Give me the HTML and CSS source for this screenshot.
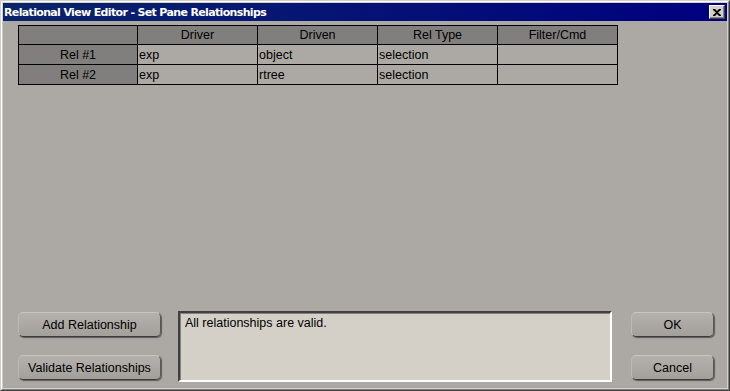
FILE: index.html
```html
<!DOCTYPE html>
<html lang="en">
<head>
    <meta charset="UTF-8">
    <title>Relational View Editor - Set Pane Relationships</title>
    <link rel="stylesheet" href="styles.css">
</head>
<body>
    <div class="window">
        <div class="frame">
            <div class="titlebar">
                <span class="title">Relational View Editor - Set Pane Relationships</span>
                <span class="close-btn">
                    <svg width="8" height="7" viewBox="0 0 8 7"><path d="M0 0h2l2 2 2-2h2v1L5 3.5 8 6v1H6L4 5 2 7H0V6l3-2.5L0 1z" fill="#000"/></svg>
                </span>
            </div>

            <div class="client">
                <div class="rel-grid">
                    <div class="cell head"></div>
                    <div class="cell head">Driver</div>
                    <div class="cell head">Driven</div>
                    <div class="cell head">Rel Type</div>
                    <div class="cell head">Filter/Cmd</div>

                    <div class="cell row-head">Rel #1</div>
                    <div class="cell">exp</div>
                    <div class="cell">object</div>
                    <div class="cell">selection</div>
                    <div class="cell"></div>

                    <div class="cell row-head">Rel #2</div>
                    <div class="cell">exp</div>
                    <div class="cell">rtree</div>
                    <div class="cell">selection</div>
                    <div class="cell"></div>
                </div>

                <div class="bottom">
                    <div class="btn-col left">
                        <button class="btn">Add Relationship</button>
                        <button class="btn">Validate Relationships</button>
                    </div>
                    <div class="status">All relationships are valid.</div>
                    <div class="btn-col right">
                        <button class="btn">OK</button>
                        <button class="btn">Cancel</button>
                    </div>
                </div>
            </div>
        </div>
    </div>
</body>
</html>
```

FILE: styles.css
```css
html, body {
    margin: 0;
    padding: 0;
}

body {
    font-family: "Liberation Sans", Arial, sans-serif;
    font-size: 12px;
    color: #000;
}

.window {
    width: 730px;
    height: 391px;
    box-sizing: border-box;
    border: 1px solid;
    border-color: #d4d0c8 #404040 #404040 #d4d0c8;
}

.frame {
    height: 100%;
    box-sizing: border-box;
    border: 1px solid;
    border-color: #fff #808080 #808080 #fff;
    padding: 1px;
    background: #d4d0c8;
    display: flex;
    flex-direction: column;
}

.titlebar {
    height: 18px;
    flex: none;
    display: flex;
    align-items: center;
    justify-content: space-between;
    padding: 0 2px 0 1px;
    background: linear-gradient(to right, #0a246a, #000080);
    color: #fff;
}

.title {
    font-family: "DejaVu Sans", sans-serif;
    font-weight: bold;
    font-size: 11px;
    letter-spacing: -0.65px;
}

.close-btn {
    width: 16px;
    height: 14px;
    box-sizing: border-box;
    display: flex;
    align-items: center;
    justify-content: center;
    background: #d4d0c8;
    border: 1px solid;
    border-color: #fff #404040 #404040 #fff;
    box-shadow: inset -1px -1px 0 #808080;
}

.client {
    flex: 1;
    background: #aca8a4;
    display: flex;
    flex-direction: column;
    padding: 4px 0 0 15px;
}

.rel-grid {
    display: grid;
    grid-template-columns: 118px repeat(4, 119px);
    grid-auto-rows: 19px;
    grid-template-rows: 18px;
    gap: 1px;
    padding: 1px;
    background: #000;
    width: max-content;
}

.cell {
    background: #aca8a4;
    padding: 1px 0 0 1px;
    line-height: 19px;
    font-size: 12.5px;
    white-space: nowrap;
}

.cell.head,
.cell.row-head {
    background: #807f7d;
    text-align: center;
    padding-left: 0;
}

.cell.head {
    line-height: 17px;
}

.bottom {
    margin-top: auto;
    margin-bottom: 6px;
    display: flex;
    align-items: flex-start;
}

.btn-col {
    display: flex;
    flex-direction: column;
    gap: 18px;
    padding-top: 1px;
}

.btn-col.left .btn {
    width: 143px;
}

.btn-col.right {
    margin-left: 19px;
}

.btn-col.right .btn {
    width: 83px;
}

.btn {
    height: 25px;
    padding: 0;
    font-family: "Liberation Sans", Arial, sans-serif;
    font-size: 12.5px;
    color: #000;
    border-radius: 5px;
    border: 1px solid;
    border-color: #c8c5c1 #5a5856 #3c3b3a #bcb9b5;
    background: linear-gradient(#b4b1ad, #a3a09c);
    box-shadow: 1px 1px 1px rgba(40, 40, 40, 0.6);
}

.status {
    width: 434px;
    height: 71px;
    box-sizing: border-box;
    margin-left: 17px;
    padding: 3px 5px;
    font-size: 12.5px;
    background: #d4d0c8;
    border: 2px solid;
    border-color: #404040 #fff #fff #404040;
    box-shadow: inset 1px 1px 0 #808080;
}
```
